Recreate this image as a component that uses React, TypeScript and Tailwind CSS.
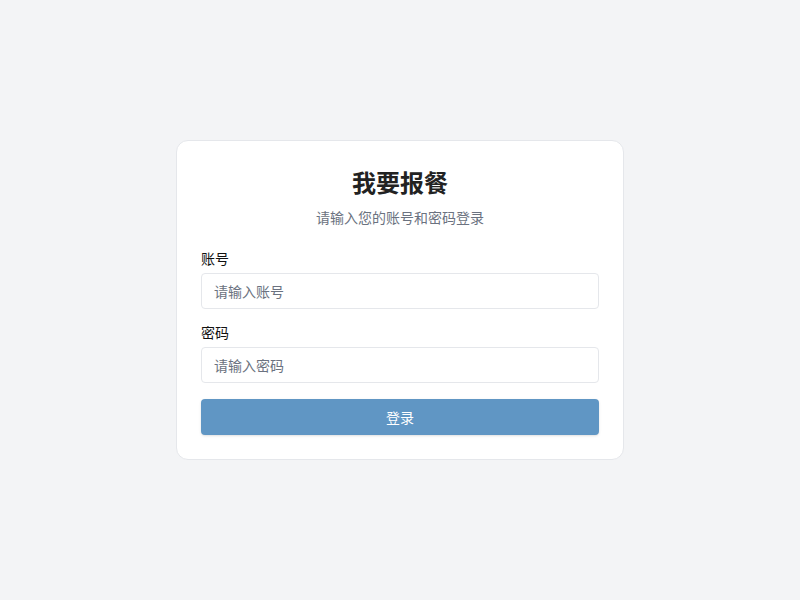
export default function App() {
  return (
    <div
      className="min-h-screen bg-[#f3f4f6] flex items-center justify-center"
      style={{ fontFamily: '"Noto Sans", "Noto Sans CJK SC", sans-serif' }}
    >
      <div className="w-[448px] bg-white border border-[#e5e7eb] rounded-xl p-6">
        <h1 className="text-center text-2xl leading-9 font-bold text-[#222]">我要报餐</h1>
        <p className="text-center text-sm leading-5 text-[#6b7280] mt-[7px]">请输入您的账号和密码登录</p>

        <form className="mt-[21px]" onSubmit={(e) => e.preventDefault()}>
          <label className="block text-sm leading-5 text-[#111]">账号</label>
          <input
            type="text"
            placeholder="请输入账号"
            className="mt-1 block w-full h-9 px-3 border border-[#e5e7eb] rounded-sm text-sm text-[#111] placeholder:text-[#6b7280] outline-none"
          />

          <label className="block text-sm leading-5 text-[#111] mt-3.5">密码</label>
          <input
            type="password"
            placeholder="请输入密码"
            className="mt-1 block w-full h-9 px-3 border border-[#e5e7eb] rounded-sm text-sm text-[#111] placeholder:text-[#6b7280] outline-none"
          />

          <button
            type="submit"
            className="mt-4 w-full h-9 pt-0.5 bg-[#6096c4] text-white text-sm rounded-sm shadow-sm"
          >
            登录
          </button>
        </form>
      </div>
    </div>
  );
}
